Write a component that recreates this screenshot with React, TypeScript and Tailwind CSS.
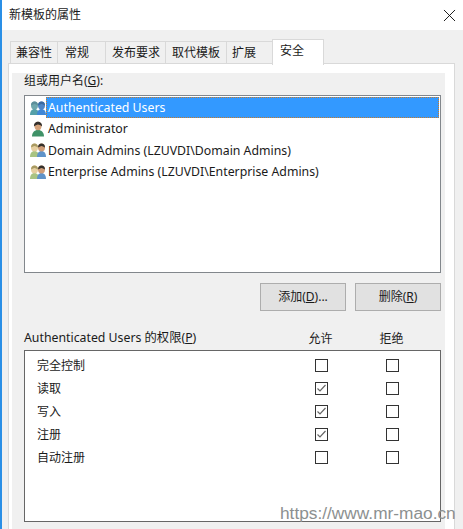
import { X } from "lucide-react";

const tabs = [
  { label: "兼容性", w: "w-[48px]", pl: "pl-[5px]" },
  { label: "常规", w: "w-[49px]", pl: "pl-[7px]" },
  { label: "发布要求", w: "w-[61px]", pl: "pl-[6px]" },
  { label: "取代模板", w: "w-[62px]", pl: "pl-[6px]" },
  { label: "扩展", w: "w-[47px]", pl: "pl-[5px]" },
];

const users = [
  { name: "Authenticated Users", icon: "blue", selected: true },
  { name: "Administrator", icon: "single" },
  { name: "Domain Admins (LZUVDI\\Domain Admins)", icon: "mixed" },
  { name: "Enterprise Admins (LZUVDI\\Enterprise Admins)", icon: "mixed" },
];

const perms = [
  { name: "完全控制", allow: false },
  { name: "读取", allow: true },
  { name: "写入", allow: true },
  { name: "注册", allow: true },
  { name: "自动注册", allow: false },
];

const Person = ({ x, head, body, hair }: { x: number; head: string; body: string; hair: string }) => (
  <g transform={`translate(${x} 0)`}>
    <path d="M0 15c0-3.800 1.800-6 4.500-6S9 11.200 9 15z" fill={body} />
    <ellipse cx="4.500" cy="5.500" rx="3.500" ry="4" fill={head} />
    <path d="M1 5.500C1 2.800 2.500 1.500 4.500 1.500S8 2.800 8 5.500C6.500 4.600 5.500 4.400 4.500 4 3.500 4.500 2 4.800 1 5.500z" fill={hair} />
  </g>
);

const UserIcon = ({ kind }: { kind: string }) => (
  <svg width="16" height="16" viewBox="0 0 16 16" className="shrink-0">
    {kind === "blue" && (
      <>
        <Person x={0} head="#6fa8ad" body="#55a0a8" hair="#5d8f9a" />
        <Person x={7} head="#4f86c6" body="#3f87d6" hair="#3a6aa0" />
      </>
    )}
    {kind === "mixed" && (
      <>
        <Person x={0} head="#e6cfa0" body="#a8c383" hair="#a89a62" />
        <Person x={7} head="#cf9d78" body="#5f93c9" hair="#33302c" />
      </>
    )}
    {kind === "single" && (
      <g transform="translate(-1 0)">
        <path d="M3 15.500c0-4 2.400-6.500 6-6.500s6 2.500 6 6.500z" fill="#3f9268" />
        <ellipse cx="9" cy="5" rx="3.500" ry="4.200" fill="#d4a27a" />
        <path d="M5 5.500C4.800 2.300 6.800.8 9 .8s4.200 1.500 4 4.700C11.500 4 10 3.800 9 3.500 7.800 4 6.200 4.200 5 5.500z" fill="#33302c" />
      </g>
    )}
  </svg>
);

const CheckBox = ({ checked }: { checked?: boolean }) => (
  <div className="w-[13px] h-[13px] border border-[#333333] bg-white flex items-center justify-center">
    {checked && (
      <svg width="11" height="11" viewBox="0 0 11 11" fill="none">
        <path d="M1.500 5.500 4 8l5.500-6" stroke="#666666" strokeWidth="1.200" />
      </svg>
    )}
  </div>
);

const App = () => {
  return (
    <div
      className="relative w-[463px] h-[529px] overflow-hidden bg-[#f0f0f0] border-l-2 border-[#2a8fe6] text-[12px] text-[#1a1a1a] flex flex-col"
      style={{ fontFamily: '"Noto Sans", "Noto Sans CJK SC", sans-serif' }}
    >
      {/* title bar */}
      <header className="h-[30px] bg-white flex items-center justify-between pl-[7px] pr-[3px] shrink-0">
        <span className="leading-none">新模板的属性</span>
        <X size={21} strokeWidth={1} className="text-black" />
      </header>

      {/* tabs */}
      <div className="flex items-end h-[34px] pl-[8px] shrink-0">
        {tabs.map((t) => (
          <div
            key={t.label}
            className={`${t.w} ${t.pl} h-[23px] border border-b-0 border-[#d9d9d9] -mr-px flex items-center leading-none`}
          >
            {t.label}
          </div>
        ))}
        <div className="relative z-10 w-[52px] h-[26px] -mb-px bg-white border border-b-0 border-[#d9d9d9] pl-[7px] pb-[3px] flex items-center leading-none">
          安全
        </div>
      </div>

      {/* panel */}
      <main className="flex-1 ml-[7px] mr-[9px] border-l-[3px] border-r-[9px] border-t-[9px] border-white outline outline-[#d9d9d9] pl-[12px] pr-[4px] flex flex-col">
        <label className="h-[16px] flex items-center leading-none shrink-0">
          组或用户名(<span className="underline">G</span>):
        </label>

        <div className="mt-[6px] h-[178px] bg-white border border-[#82878c] p-px shrink-0">
          {users.map((u) => (
            <div key={u.name} className="h-[21.300px] flex items-center pl-[4px]">
              <UserIcon kind={u.icon} />
              <span
                className={`flex-1 h-[21px] pl-[2px] pt-px flex items-center text-[12.300px] ${
                  u.selected ? "bg-[#3399ff] text-white outline-1 -outline-offset-1 outline-dotted outline-[#c47a2c]" : ""
                }`}
              >
                {u.name}
              </span>
            </div>
          ))}
        </div>

        <div className="mt-[10px] flex justify-end gap-[9px] shrink-0">
          <button className="w-[86px] h-[28px] bg-[#e1e1e1] border border-[#adadad]">
            添加(<span className="underline">D</span>)...
          </button>
          <button className="w-[86px] h-[28px] bg-[#e1e1e1] border border-[#adadad]">
            删除(<span className="underline">R</span>)
          </button>
        </div>

        <div className="mt-[16px] h-[23px] flex items-center shrink-0">
          <span className="flex-1 text-[12.300px]">
            Authenticated Users 的权限(<span className="underline">P</span>)
          </span>
          <span className="w-[71px] text-center">允许</span>
          <span className="w-[71px] mr-[14px] text-center">拒绝</span>
        </div>

        <div className="h-[172px] bg-white border border-[#666666] pt-[3px] shrink-0">
          {perms.map((p) => (
            <div key={p.name} className="h-[23px] flex items-center pl-[12px]">
              <span className="flex-1">{p.name}</span>
              <div className="w-[71px] flex justify-center">
                <CheckBox checked={p.allow} />
              </div>
              <div className="w-[70px] mr-[13px] flex justify-center">
                <CheckBox />
              </div>
            </div>
          ))}
        </div>
      </main>

      {/* watermark */}
      <div
        className="absolute left-[278px] top-[502px] whitespace-nowrap text-[17.300px] leading-[22px] text-[#8c9090]"
        style={{ fontFamily: '"Liberation Sans", sans-serif' }}
      >
        https://www.mr-mao.cn
      </div>
    </div>
  );
};

export default App;
